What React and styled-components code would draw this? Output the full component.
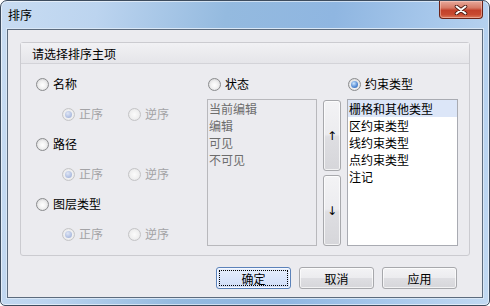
import React from "react";
import styled, { createGlobalStyle, css } from "styled-components";

const GlobalStyle = createGlobalStyle`
  html, body {
    margin: 0;
    padding: 0;
    background: #ffffff;
  }
  body {
    font-family: "Noto Sans CJK SC", "Liberation Sans", sans-serif;
    font-size: 12px;
  }
`;

const Window = styled.div`
  width: 490px;
  height: 306px;
  box-sizing: border-box;
  border: 1px solid #3d4c5e;
  border-radius: 7px 7px 5px 5px;
  display: flex;
  flex-direction: column;
  background: linear-gradient(
    100deg,
    #c8dcf2 0%,
    #bcd4ef 18%,
    #94badf 42%,
    #8fb6e1 62%,
    #a9c9ec 82%,
    #c2d9f2 100%
  );
  box-shadow: inset 0 0 0 1px rgba(255, 255, 255, 0.55);
  overflow: hidden;
`;

const TitleBar = styled.div`
  height: 28px;
  flex: none;
  display: flex;
  align-items: flex-start;
  padding-left: 7px;
`;

const Title = styled.div`
  margin-top: 6px;
  font-size: 12px;
  line-height: 16px;
  color: #000;
`;

const CloseButton = styled.div`
  margin-left: auto;
  margin-right: 6px;
  width: 44px;
  height: 18px;
  box-sizing: border-box;
  border: 1px solid #6c2318;
  border-top: none;
  border-radius: 0 0 4px 4px;
  background: linear-gradient(
    180deg,
    #e8a99b 0%,
    #d67a66 40%,
    #c2402a 55%,
    #c84a31 80%,
    #dc7a5c 100%
  );
  box-shadow: inset 0 0 0 1px rgba(255, 220, 210, 0.45);
  display: flex;
  align-items: center;
  justify-content: center;
`;

const Client = styled.div`
  flex: 1;
  margin: 0 6px 7px 6px;
  border: 1px solid #5c6b7d;
  box-shadow: 0 0 0 1px #d9e7f6;
  background: #ebebef;
  display: flex;
  flex-direction: column;
  padding: 12px 12px 0 12px;
`;

const GroupBox = styled.div`
  height: 214px;
  box-sizing: border-box;
  border: 1px solid #cbcbd0;
  border-radius: 3px;
  display: flex;
  flex-direction: column;
`;

const GroupHeader = styled.div`
  height: 20px;
  flex: none;
  border-bottom: 1px solid #d3d3d8;
  background: linear-gradient(180deg, #f1f1f4 0%, #e5e5e9 100%);
  padding-left: 11px;
  display: flex;
  align-items: center;
  color: #000;
`;

const GroupBody = styled.div`
  padding: 12px 10px 9px 15px;
  display: grid;
  grid-template-columns: 165px 110px 18px 111px;
  grid-template-rows: 16px 147px;
  column-gap: 6px;
  row-gap: 7px;
`;

const LeftColumn = styled.div`
  grid-row: 1 / span 2;
  display: grid;
  grid-auto-rows: 16px;
  row-gap: 14px;
  align-content: start;
`;

const OptionRow = styled.div`
  display: flex;
  align-items: center;
  padding-left: ${(p) => p.$indent || 0}px;
`;

const Option = styled.label`
  display: flex;
  align-items: center;
  gap: 4px;
  width: ${(p) => (p.$width ? `${p.$width}px` : "auto")};
  color: ${(p) => (p.$disabled ? "#a3a3a6" : "#000")};
  line-height: 16px;
  white-space: nowrap;
`;

const Radio = styled.span`
  width: 13px;
  height: 13px;
  box-sizing: border-box;
  border-radius: 50%;
  flex: none;
  position: relative;
  border: 1px solid ${(p) => (p.$disabled ? "#c4c4c6" : "#8a8b8d")};
  background: ${(p) =>
    p.$disabled
      ? "radial-gradient(circle at 50% 50%, #fbfbfb 0%, #f0f0f0 55%, #dcdcdf 100%)"
      : "radial-gradient(circle at 50% 55%, #ffffff 0%, #f0f0f0 45%, #c9c9cc 100%)"};
  ${(p) =>
    p.$checked &&
    css`
      &::after {
        content: "";
        position: absolute;
        left: 2px;
        top: 2px;
        width: 7px;
        height: 7px;
        border-radius: 50%;
        background: ${p.$disabled
          ? "radial-gradient(circle at 40% 35%, #dfe6f5 0%, #b3c1e2 60%, #9aaad4 100%)"
          : "radial-gradient(circle at 40% 35%, #cfe8ff 0%, #5a8fd6 55%, #2b5faf 100%)"};
      }
    `}
`;

const ColumnHeader = styled.div`
  display: flex;
  align-items: center;
  padding-left: 1px;
`;

const ListBox = styled.div`
  box-sizing: border-box;
  border: 1px solid ${(p) => (p.$disabled ? "#b8b8bc" : "#a9abb2")};
  background: ${(p) => (p.$disabled ? "#ebebef" : "#ffffff")};
  color: ${(p) => (p.$disabled ? "#6d6d6d" : "#000")};
  display: flex;
  flex-direction: column;
  overflow: hidden;
`;

const ListItem = styled.div`
  height: 17px;
  line-height: 17px;
  padding-left: 1px;
  white-space: nowrap;
  background: ${(p) => (p.$selected ? "#dce6f8" : "transparent")};
`;

const MoveButtons = styled.div`
  display: flex;
  flex-direction: column;
  gap: 4px;
  padding-top: 1px;
`;

const buttonFace = css`
  box-sizing: border-box;
  border: 1px solid #a7a8ac;
  border-radius: 3px;
  background: linear-gradient(
    180deg,
    #f3f3f5 0%,
    #ececef 48%,
    #dedee2 52%,
    #d6d6da 100%
  );
  box-shadow: inset 0 0 0 1px rgba(255, 255, 255, 0.7);
  display: flex;
  align-items: center;
  justify-content: center;
  color: #000;
`;

const MoveButton = styled.div`
  ${buttonFace};
  flex: 1;
  font-family: "DejaVu Sans", sans-serif;
  font-size: 12px;
`;

const ButtonRow = styled.div`
  display: flex;
  justify-content: flex-end;
  gap: 8px;
  margin-top: 11px;
  padding-right: 13px;
`;

const Button = styled.div`
  ${buttonFace};
  width: 75px;
  height: 22px;
  ${(p) =>
    p.$default &&
    css`
      border-color: #5b82ba;
      background: linear-gradient(180deg, #e6eefc 0%, #dbe6fb 50%, #cfdcf8 100%);
      box-shadow: inset 0 0 0 1px #f5f8ff;
      position: relative;
      &::after {
        content: "";
        position: absolute;
        inset: 2px;
        border: 1px dotted #000;
      }
    `}
`;

const CloseGlyph = () => (
  <svg width="14" height="10" viewBox="0 0 14 10">
    <path
      d="M2.5 1.5 L11.5 8.5 M11.5 1.5 L2.5 8.5"
      stroke="#4a1a12"
      strokeWidth="3.6"
      strokeLinecap="round"
    />
    <path
      d="M2.5 1.5 L11.5 8.5 M11.5 1.5 L2.5 8.5"
      stroke="#ffffff"
      strokeWidth="2"
      strokeLinecap="round"
    />
  </svg>
);

const sortKeys = [
  { label: "名称" },
  { label: "路径" },
  { label: "图层类型" },
];

const statusItems = ["当前编辑", "编辑", "可见", "不可见"];
const constraintItems = ["栅格和其他类型", "区约束类型", "线约束类型", "点约束类型", "注记"];

const App = () => (
  <>
    <GlobalStyle />
    <Window>
      <TitleBar>
        <Title>排序</Title>
        <CloseButton>
          <CloseGlyph />
        </CloseButton>
      </TitleBar>
      <Client>
        <GroupBox>
          <GroupHeader>请选择排序主项</GroupHeader>
          <GroupBody>
            <LeftColumn>
              {sortKeys.map((key) => (
                <React.Fragment key={key.label}>
                  <OptionRow>
                    <Option>
                      <Radio />
                      {key.label}
                    </Option>
                  </OptionRow>
                  <OptionRow $indent={26}>
                    <Option $disabled $width={66}>
                      <Radio $disabled $checked />
                      正序
                    </Option>
                    <Option $disabled>
                      <Radio $disabled />
                      逆序
                    </Option>
                  </OptionRow>
                </React.Fragment>
              ))}
            </LeftColumn>
            <ColumnHeader>
              <Option>
                <Radio />
                状态
              </Option>
            </ColumnHeader>
            <div />
            <ColumnHeader>
              <Option>
                <Radio $checked />
                约束类型
              </Option>
            </ColumnHeader>
            <ListBox $disabled>
              {statusItems.map((item) => (
                <ListItem key={item}>{item}</ListItem>
              ))}
            </ListBox>
            <MoveButtons>
              <MoveButton>↑</MoveButton>
              <MoveButton>↓</MoveButton>
            </MoveButtons>
            <ListBox>
              {constraintItems.map((item, i) => (
                <ListItem key={item} $selected={i === 0}>
                  {item}
                </ListItem>
              ))}
            </ListBox>
          </GroupBody>
        </GroupBox>
        <ButtonRow>
          <Button $default>确定</Button>
          <Button>取消</Button>
          <Button>应用</Button>
        </ButtonRow>
      </Client>
    </Window>
  </>
);

export default App;
